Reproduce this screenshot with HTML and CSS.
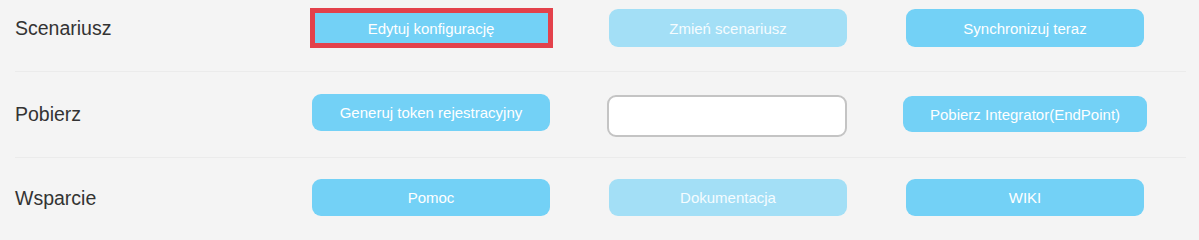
FILE: index.html
```html
<!DOCTYPE html>
<html lang="pl">
<head>
<meta charset="utf-8">
<title>Ustawienia</title>
<link rel="stylesheet" href="styles.css">
</head>
<body>
<div class="panel">
  <div class="row">
    <div class="label">Scenariusz</div>
    <div class="cell"><button class="btn btn-focus">Edytuj konfigurację</button></div>
    <div class="cell"><button class="btn btn-disabled">Zmień scenariusz</button></div>
    <div class="cell"><button class="btn">Synchronizuj teraz</button></div>
  </div>
  <div class="row">
    <div class="label">Pobierz</div>
    <div class="cell"><button class="btn btn-short">Generuj token rejestracyjny</button></div>
    <div class="cell"><input class="field" type="text"></div>
    <div class="cell"><button class="btn btn-wide">Pobierz Integrator(EndPoint)</button></div>
  </div>
  <div class="row row-last">
    <div class="label">Wsparcie</div>
    <div class="cell"><button class="btn">Pomoc</button></div>
    <div class="cell"><button class="btn btn-disabled">Dokumentacja</button></div>
    <div class="cell"><button class="btn">WIKI</button></div>
  </div>
</div>
</body>
</html>
```

FILE: styles.css
```css
html, body {
  margin: 0;
  padding: 0;
  background: #f4f4f4;
  overflow: hidden;
}

body {
  font-family: "Liberation Sans", Arial, sans-serif;
}

.panel {
  margin: -14px 0 0 15px;
  width: 1171px;
}

.row {
  display: grid;
  grid-template-columns: 297px 297px 297px 1fr;
  align-items: center;
  height: 42px;
  padding: 21px 0 22px;
  border-bottom: 1px solid #ebebeb;
}

.label {
  font-size: 19.5px;
  color: #333333;
}

.cell {
  width: 238px;
  height: 42px;
  display: flex;
  align-items: center;
  justify-content: center;
}

.row-last .cell {
  align-items: flex-start;
}

.row-last .btn {
  height: 37px;
}

.row-last .label {
  margin-top: -4px;
}

.btn {
  box-sizing: border-box;
  width: 238px;
  height: 38px;
  flex: none;
  border: none;
  border-radius: 9px;
  background: #73d1f6;
  color: #ffffff;
  font-family: "Liberation Sans", Arial, sans-serif;
  font-size: 15px;
  padding: 0;
}

.btn-disabled {
  background: #a3dff6;
  color: #f5fcff;
}

.btn-focus {
  width: 243px;
  height: 40px;
  border: 5px solid #e3414b;
  border-radius: 0;
}

.btn-short {
  height: 37px;
  margin-top: -3px;
}

.btn-wide {
  width: 244px;
  height: 36px;
}

.field {
  box-sizing: border-box;
  width: 240px;
  height: 42px;
  flex: none;
  margin-left: -2px;
  border: 2px solid #c4c4c4;
  border-radius: 9px;
  background: #ffffff;
  margin-top: 3px;
}
```
